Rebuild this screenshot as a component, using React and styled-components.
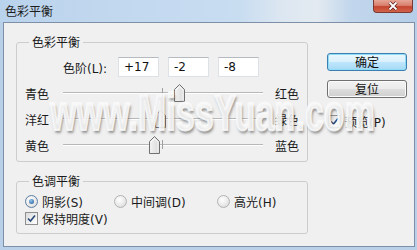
import React from 'react'
import styled, { createGlobalStyle } from 'styled-components';

const Global = createGlobalStyle`
    html, body { margin: 0; padding: 0; }
    body {
        width: 417px;
        height: 250px;
        overflow: hidden;
        font-family: "DejaVu Sans", "Noto Sans CJK SC", sans-serif;
        font-size: 12px;
        color: #1b1b1b;
    }
`

const Window = styled.div`
    width: 417px;
    height: 250px;
    background: #b9d0e8;
    display: flex;
    flex-direction: column;
`

const TitleBar = styled.div`
    height: 22px;
    flex: none;
    display: flex;
    align-items: flex-start;
    justify-content: space-between;
    padding: 0 4px 0 5px;
    background: linear-gradient(90deg, #bad3ec 0%, #c3d9ef 35%, #c9ddf1 58%, #dde7f1 68%, #e3eaf1 76%, #c2d7ec 84%, #b6cee8 100%);
`

const Title = styled.div`
    font-family: "Noto Sans CJK SC", sans-serif;
    font-size: 12px;
    line-height: 22px;
    color: #1e1e1e;
`

const CloseBtn = styled.div`
    width: 40px;
    height: 13px;
    border: 1px solid #7a3a31;
    border-top: none;
    border-radius: 0 0 4px 4px;
    background: linear-gradient(180deg, #e7a596 0%, #d9806f 45%, #c5452f 55%, #d2634b 100%);
    display: flex;
    align-items: center;
    justify-content: center;
    box-sizing: border-box;
`

const Body = styled.div`
    position: relative;
    flex: 1;
    margin: 0 2px 3px 3px;
    border: 1px solid #7d90a8;
    background: #f0f0f0;
    display: flex;
    gap: 19px;
    padding: 11px 0 0 12px;
`

const Main = styled.div`
    width: 292px;
    display: flex;
    flex-direction: column;
    gap: 11px;
`

const Group = styled.fieldset`
    margin: 0;
    padding: ${({ pad }) => pad};
    border: 1px solid #cdcdcd;
    border-radius: 3px;
    box-sizing: border-box;
    width: 292px;
    min-inline-size: 0;
`

const Legend = styled.legend`
    font-family: "Noto Sans CJK SC", sans-serif;
    font-size: 12px;
    line-height: 16px;
    padding: 0 3px;
    margin-left: 4px;
`

const LevelsRow = styled.div`
    display: flex;
    align-items: center;
    height: 20px;
    padding-left: 38px;
    margin-bottom: 3px;
`

const LevelsLabel = styled.div`
    width: 55px;
`

const Inputs = styled.div`
    display: flex;
    gap: 9px;
`

const NumBox = styled.div`
    width: 41px;
    height: 20px;
    box-sizing: border-box;
    background: #fff;
    border: 1px solid #dde2e8;
    border-top-color: #b5bac1;
    padding-left: 5px;
    font-size: 12px;
    line-height: 18px;
    color: #111;
`

const SliderRow = styled.div`
    display: grid;
    grid-template-columns: 38px 200px 1fr;
    align-items: center;
    height: 26px;
`

const Track = styled.div`
    position: relative;
    height: 2px;
    border-top: 1px solid #b8b8b8;
    border-bottom: 1px solid #fff;
    box-sizing: border-box;
`

const Tick = styled.div`
    position: absolute;
    left: 99px;
    top: -5px;
    width: 1px;
    height: 9px;
    background: #a0a0a0;
`

const Thumb = styled.svg`
    position: absolute;
    top: -9px;
    width: 11px;
    height: 18px;
`

const RightLabel = styled.div`
    padding-left: 12px;
`

const OptionRow = styled.div`
    display: flex;
    align-items: center;
    height: 14px;
    margin-top: ${({ gap }) => gap || 0}px;
`

const Option = styled.label`
    display: flex;
    align-items: center;
    gap: 4px;
    width: ${({ w }) => w ? `${w}px` : 'auto'};
`

const Radio = styled.span`
    width: 13px;
    height: 13px;
    box-sizing: border-box;
    border-radius: 50%;
    border: 1px solid ${({ on }) => on ? '#5d7ea3' : '#b4b4b4'};
    background: radial-gradient(circle at 40% 35%, #ffffff 0%, #e9e9e9 55%, #cfcfcf 100%);
    display: flex;
    align-items: center;
    justify-content: center;
    &::after {
        content: '';
        width: 5px;
        height: 5px;
        border-radius: 50%;
        background: ${({ on }) => on ? 'radial-gradient(circle at 40% 35%, #8fc3ef, #1c5489)' : 'transparent'};
    }
`

const Check = styled.span`
    width: 13px;
    height: 13px;
    box-sizing: border-box;
    border: 1px solid #8e8f8f;
    background: linear-gradient(135deg, #dcdcdc, #ffffff);
    display: flex;
    align-items: center;
    justify-content: center;
`

const Side = styled.div`
    width: 80px;
    padding-top: 19px;
    display: flex;
    flex-direction: column;
`

const Button = styled.div`
    height: 18px;
    box-sizing: border-box;
    border-radius: 3px;
    font-family: "Noto Sans CJK SC", sans-serif;
    font-size: 12px;
    line-height: 16px;
    text-align: center;
    color: #111;
    ${({ primary }) => primary ? `
        border: 1px solid #3c7fb1;
        box-shadow: inset 0 0 0 1px #8fdcf6;
        background: linear-gradient(180deg, #eaf6fd 0%, #d9f0fc 50%, #bee6fd 52%, #a7d9f5 100%);
    ` : `
        border: 1px solid #707070;
        box-shadow: inset 0 0 0 1px #fbfbfb;
        background: linear-gradient(180deg, #f2f2f2 0%, #ebebeb 50%, #dddddd 52%, #cfcfcf 100%);
    `}
    margin-bottom: 9px;
`

const PreviewOpt = styled.label`
    display: flex;
    align-items: center;
    gap: 4px;
    margin-top: 6px;
    padding-left: 1px;
`

const Watermark = styled.div`
    position: absolute;
    left: 46px;
    top: 63px;
    font-family: "Liberation Sans", sans-serif;
    font-weight: 700;
    font-size: 52px;
    line-height: 52px;
    white-space: nowrap;
    transform: scaleX(0.656);
    transform-origin: left top;
    color: rgba(250, 250, 250, 0.85);
    -webkit-text-stroke: 2px rgba(250, 250, 250, 0.85);
    text-shadow: 2px 3px 3px rgba(60, 60, 60, 0.5);
    pointer-events: none;
`

const CheckMark = () => (
    <svg width="9" height="9" viewBox="0 0 9 9">
        <path d="M1 4.5 L3.5 7 L8 1.5" fill="none" stroke="#2a4a7a" strokeWidth="1.6" />
    </svg>
)

const SliderThumb = ({ value }) => (
    <Thumb style={{ left: `${99 + value - 5}px` }} viewBox="0 0 11 18">
        <defs>
            <linearGradient id="tg" x1="0" y1="0" x2="1" y2="0">
                <stop offset="0" stopColor="#f4f4f4" />
                <stop offset="1" stopColor="#d8d8d8" />
            </linearGradient>
        </defs>
        <path d="M0.5 5.5 L5.5 0.5 L10.5 5.5 L10.5 17.5 L0.5 17.5 Z" fill="url(#tg)" stroke="#707070" />
        <path d="M2 6 L5.5 2.5 L9 6 L9 16" fill="none" stroke="#fff" strokeWidth="0.8" />
    </Thumb>
)

const sliders = [
    { left: '青色', right: '红色', value: 17 },
    { left: '洋红', right: '绿色', value: -2 },
    { left: '黄色', right: '蓝色', value: -8 },
]

const App = () => {
    return (
        <>
            <Global />
            <Window>
                <TitleBar>
                    <Title>色彩平衡</Title>
                    <CloseBtn>
                        <svg width="12" height="10" viewBox="0 0 12 10">
                            <path d="M2.5 1.5 L9.5 8.5 M9.5 1.5 L2.5 8.5" stroke="#5a2018" strokeWidth="3.2" />
                            <path d="M2.5 1.5 L9.5 8.5 M9.5 1.5 L2.5 8.5" stroke="#ffffff" strokeWidth="1.8" />
                        </svg>
                    </CloseBtn>
                </TitleBar>
                <Body>
                    <Main>
                        <Group pad="7px 8px 3px 8px">
                            <Legend>色彩平衡</Legend>
                            <LevelsRow>
                                <LevelsLabel>色阶(L):</LevelsLabel>
                                <Inputs>
                                    {sliders.map(s => (
                                        <NumBox key={s.left}>{s.value > 0 ? `+${s.value}` : s.value}</NumBox>
                                    ))}
                                </Inputs>
                            </LevelsRow>
                            {sliders.map(s => (
                                <SliderRow key={s.left}>
                                    <div>{s.left}</div>
                                    <Track>
                                        <Tick />
                                        <SliderThumb value={s.value} />
                                    </Track>
                                    <RightLabel>{s.right}</RightLabel>
                                </SliderRow>
                            ))}
                        </Group>
                        <Group pad="5px 8px 8px 8px">
                            <Legend>色调平衡</Legend>
                            <OptionRow>
                                <Option w={89}><Radio on />阴影(S)</Option>
                                <Option w={103}><Radio />中间调(D)</Option>
                                <Option><Radio />高光(H)</Option>
                            </OptionRow>
                            <OptionRow gap={3}>
                                <Option><Check><CheckMark /></Check>保持明度(V)</Option>
                            </OptionRow>
                        </Group>
                    </Main>
                    <Side>
                        <Button primary>确定</Button>
                        <Button>复位</Button>
                        <PreviewOpt><Check><CheckMark /></Check>预览(P)</PreviewOpt>
                    </Side>
                    <Watermark>www.MissYuan.com</Watermark>
                </Body>
            </Window>
        </>
    )
}

export default App
